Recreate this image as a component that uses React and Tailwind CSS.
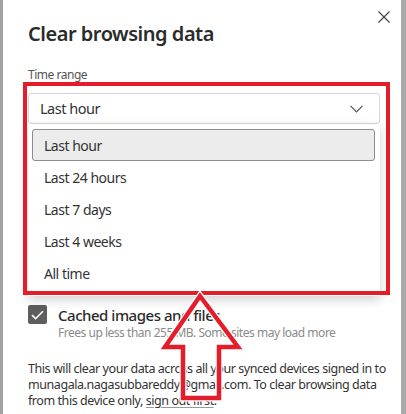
import React from 'react';

const ranges = ['Last hour', 'Last 24 hours', 'Last 7 days', 'Last 4 weeks', 'All time'];

const App = () => {
  return (
    <div
      className="flex w-[406px] h-[414px] overflow-hidden bg-[#a4a4a4] relative tracking-[-0.03em]"
      style={{ fontFamily: '"Noto Sans", "Open Sans", sans-serif' }}
    >
      <div className="w-[3px] shrink-0 bg-[#a2a2a2]" />

      {/* Hộp thoại */}
      <div className="flex-1 bg-white flex flex-col">
        <div className="flex items-start justify-between pl-[25px] pr-[11px] pt-[11px]">
          <h2 className="mt-[9px] text-[20px] leading-[28px] font-semibold text-[#2b2b2b]">
            Clear browsing data
          </h2>
          <svg width="12" height="12" viewBox="0 0 12 12" className="text-[#444]">
            <path d="M0.5 0.5 L11.5 11.5 M11.5 0.5 L0.5 11.5" stroke="currentColor" strokeWidth="1.2" fill="none" />
          </svg>
        </div>

        <div className="pl-[25px] pr-[21px]">
          <p className="mt-[19px] text-[12px] leading-[16px] text-[#555]">Time range</p>

          <div className="relative mt-[10px]">
            <div className="h-[31px] flex items-center justify-between pl-[11px] pr-[16px] border border-[#d6d6d6] rounded-[3px] bg-white">
              <span className="text-[14.5px] text-[#333]">Last hour</span>
              <svg width="13" height="8" viewBox="0 0 13 8">
                <path d="M0.5 0.8 L6.5 6.8 L12.5 0.8" stroke="#555" strokeWidth="1.2" fill="none" />
              </svg>
            </div>

            {/* Danh sách chọn */}
            <div className="bg-white shadow-[0_4px_10px_rgba(0,0,0,0.18)] pt-[5px] pb-[7px]">
              {ranges.map((r, i) => (
                <div
                  key={r}
                  className={
                    i === 0
                      ? 'h-[32px] ml-[4px] mr-[5px] flex items-center pl-[11px] bg-[#ececec] border-[1.5px] border-[#8c8c8c] rounded-[3px] text-[14px] text-[#333]'
                      : 'h-[32px] ml-[4px] mr-[5px] flex items-center pl-[12px] text-[14px] text-[#333]'
                  }
                >
                  {r}
                </div>
              ))}
            </div>

            <div className="absolute -left-[5px] -top-[11px] -right-[10px] bottom-[1px] border-4 border-[#e41d2b] pointer-events-none" />
          </div>

          <div className="mt-[9px] flex gap-[11px]">
            <div className="w-[19px] h-[19px] shrink-0 rounded-[2px] bg-[#5e5e5e] flex items-center justify-center">
              <svg width="13" height="10" viewBox="0 0 13 10">
                <path d="M1 5.2 L4.6 8.6 L12 1.2" stroke="white" strokeWidth="1.6" fill="none" />
              </svg>
            </div>
            <div className="mt-[1px]">
              <p className="text-[15px] leading-[19px] font-medium text-[#2b2b2b]">Cached images and files</p>
              <p className="text-[12px] leading-[16px] text-[#8a8a8a]">
                Frees up less than 255 MB. Some sites may load more
              </p>
            </div>
          </div>

          <p className="mt-[20px] -mr-[6px] text-[12.5px] leading-[16px] tracking-[-0.035em] text-[#333]">
            This will clear your data across all your synced devices signed in to munagala.nagasubbareddy@gmail.com. To clear browsing data from this device only,{' '}
            <span className="underline decoration-[#999] underline-offset-2">sign out first</span>.
          </p>
        </div>
      </div>

      <div className="w-[5px] shrink-0 bg-[#a8a8a8]" />

      {/* Mũi tên chú thích */}
      <svg className="absolute left-[150px] top-[284px]" width="100" height="130" viewBox="0 0 100 130">
        <path
          d="M50 12 L15 63 L33 63 L33 114 L69 114 L69 63 L88 63 Z"
          fill="none"
          stroke="white"
          strokeWidth="7"
          strokeLinejoin="miter"
        />
        <path
          d="M50 12 L15 63 L33 63 L33 114 L69 114 L69 63 L88 63 Z"
          fill="none"
          stroke="#e41d2b"
          strokeWidth="4.5"
          strokeLinejoin="miter"
        />
      </svg>
    </div>
  );
};

export default App;
